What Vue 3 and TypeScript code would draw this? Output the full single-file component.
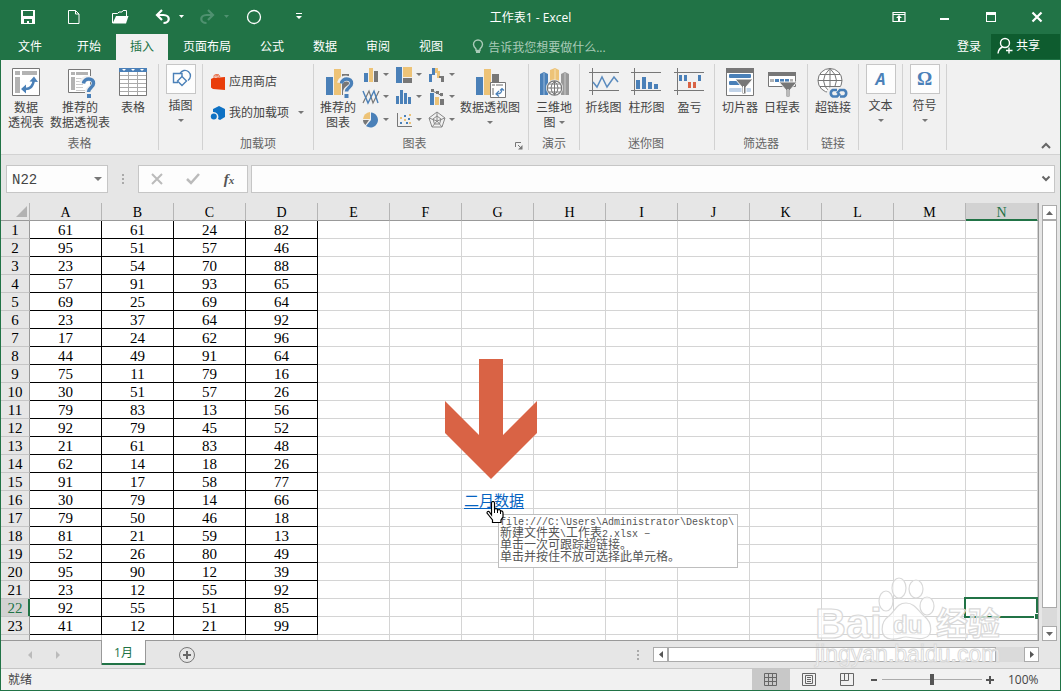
<script setup lang="ts">
import { ref } from 'vue'

const columns: string[] = ['A', 'B', 'C', 'D', 'E', 'F', 'G', 'H', 'I', 'J', 'K', 'L', 'M', 'N']

const values: number[][] = [
  [61, 61, 24, 82],
  [95, 51, 57, 46],
  [23, 54, 70, 88],
  [57, 91, 93, 65],
  [69, 25, 69, 64],
  [23, 37, 64, 92],
  [17, 24, 62, 96],
  [44, 49, 91, 64],
  [75, 11, 79, 16],
  [30, 51, 57, 26],
  [79, 83, 13, 56],
  [92, 79, 45, 52],
  [21, 61, 83, 48],
  [62, 14, 18, 26],
  [91, 17, 58, 77],
  [30, 79, 14, 66],
  [79, 50, 46, 18],
  [81, 21, 59, 13],
  [52, 26, 80, 49],
  [95, 90, 12, 39],
  [23, 12, 55, 92],
  [92, 55, 51, 85],
  [41, 12, 21, 99],
]

const tabs: string[] = ['文件', '开始', '插入', '页面布局', '公式', '数据', '审阅', '视图']
const activeTab = ref('插入')
const cellName = ref('N22')
const formula = ref('')
const zoom = ref(50)
const selected = { column: 'N', row: 22 }
</script>

<template>
  <div class="window">
    <header class="title-bar">
      <div class="quick">
        <button class="q-main" aria-label="保存">
          <svg width="16" height="16" viewBox="0 0 16 16"><path d="M1 1h14v14H1z" fill="#fff" /><path d="M3 2h10v5H3zM4 10h8v4H9v-2H7v2H4z" fill="#217346" /><path d="M7 12h2v2H7z" fill="#fff" /></svg>
        </button>
        <button class="q-main" aria-label="新建">
          <svg width="16" height="16" viewBox="0 0 16 16"><path d="M2.500 1.500h7l3.500 3.500v9.500H2.500zM9.500 1.500V5H13" fill="none" stroke="#fff" /></svg>
        </button>
        <button class="q-main q-open" aria-label="打开">
          <svg width="18" height="16" viewBox="0 0 18 16"><path d="M1.500 14V4.500h5L8 3h3l1-1.500h3.500V7" fill="none" stroke="#fff" /><path d="M5 7h12.500L15 14.500H1.500z" fill="#fff" /></svg>
        </button>
        <button class="q-split" aria-label="撤消">
          <svg width="30" height="16" viewBox="0 0 30 16"><path d="M7 1L2 6l5 5M2.500 6h6c7 0 7 8 0 8" fill="none" stroke="#fff" stroke-width="2.200" /><path d="M24 6h5l-2.500 3z" fill="#fff" /></svg>
        </button>
        <button class="q-split" aria-label="恢复" disabled>
          <svg width="30" height="16" viewBox="0 0 30 16"><path d="M9 1l5 5-5 5M13.500 6h-6c-7 0-7 8 0 8" fill="none" stroke="#4f9170" stroke-width="2.200" /><path d="M25 6h5l-2.500 3z" fill="#4f9170" /></svg>
        </button>
        <button class="q-circle" aria-label="椭圆">
          <svg width="16" height="16" viewBox="0 0 16 16"><circle cx="8" cy="8" r="6.500" fill="none" stroke="#fff" stroke-width="1.300" /></svg>
        </button>
        <button class="q-more" aria-label="自定义快速访问工具栏">
          <svg width="8" height="10" viewBox="0 0 8 10"><path d="M1 1h6v1H1zM1 4h6L4 7z" fill="#fff" /></svg>
        </button>
      </div>
      <div class="title">工作表1 - Excel</div>
      <div class="controls">
        <button aria-label="功能区显示选项">
          <svg width="14" height="12" viewBox="0 0 14 12"><path d="M1 1.500h12v9H1zM1 3.500h12" fill="none" stroke="#fff" stroke-width="1.200" /><path d="M7 4l3 3H8v3H6V7H4z" fill="#fff" /></svg>
        </button>
        <button aria-label="最小化">
          <svg width="12" height="12" viewBox="0 0 12 12"><path d="M1 7h9v2H1z" fill="#fff" /></svg>
        </button>
        <button aria-label="最大化">
          <svg width="12" height="12" viewBox="0 0 12 12"><path d="M1 1h10v10H1zM2 4v6h8V4z" fill="#fff" fill-rule="evenodd" /></svg>
        </button>
        <button aria-label="关闭">
          <svg width="12" height="12" viewBox="0 0 12 12"><path d="M1.500 1.500l9 9M10.500 1.500l-9 9" stroke="#fff" stroke-width="2.200" /></svg>
        </button>
      </div>
    </header>

    <nav class="tabs">
      <button
        v-for="tab in tabs"
        :key="tab"
        class="tab"
        :class="{ active: tab === activeTab, file: tab === '文件' }"
        @click="activeTab = tab"
      >{{ tab }}</button>
      <button class="tell">
        <svg width="12" height="16" viewBox="0 0 12 16"><path d="M4 11.500V10C2.500 8.500 1.500 7.500 1.500 5.500a4.500 4.500 0 0 1 9 0C10.500 7.500 9.500 8.500 8 10v1.500z" fill="none" stroke="#a9cbb8" stroke-width="1.400" /><path d="M4 12h4v2H4z" fill="#a9cbb8" /></svg>
        告诉我您想要做什么...
      </button>
      <div class="account">
        <button class="sign">登录</button>
        <button class="share">
          <svg width="16" height="18" viewBox="0 0 16 18"><circle cx="8" cy="6" r="4.500" fill="none" stroke="#fff" stroke-width="1.400" /><path d="M1 16.500c.5-4 2-5.500 4.500-6.500M12 10.500v6M9 13.500h6.500" fill="none" stroke="#fff" stroke-width="1.400" /></svg>
          共享
        </button>
      </div>
    </nav>

    <section class="ribbon" aria-label="插入">
      <div class="group g-tables">
        <div class="items">
          <button class="big w50">
            <svg width="32" height="32" viewBox="0 0 32 32"><path d="M2.500 2.500h27v27h-27z" fill="#fff" stroke="#777" /><path d="M5 5h5v4H5zM12 5h15v4H12zM5 11h5v16H5z" fill="#b3b3b3" /><path d="M14 23q9 1 10-10" fill="none" stroke="#4a80b8" stroke-width="2.500" /><path d="M16 18.500L11 23l5 4.500zM19.500 15.500l4.500-5 4 5.500z" fill="#4a80b8" /></svg>
            <span>数据<br />透视表</span>
          </button>
          <button class="big w58">
            <svg width="32" height="32" viewBox="0 0 32 32"><path d="M4.500 3.500h22v23h-22z" fill="#fff" stroke="#777" /><path d="M7 6h4v3H7zM12 6h12v3H12zM7 11h4v13H7z" fill="#b3b3b3" /><path d="M12 12.500h9M12 15.500h7M12 18.500h7M12 21.500h7M12 24.500h9" stroke="#ccc" /><path d="M18 17c1-6 13-6 12 1 0 4-6 4-6 8v6" fill="none" stroke="#f0f0f0" stroke-width="6" /><path d="M19.500 17.500c.5-6 10.500-6 10 0 0 4-5 4-5 8.500" fill="none" stroke="#4a80b8" stroke-width="3.500" /><path d="M23 28h4v4h-4z" fill="#4a80b8" /></svg>
            <span>推荐的<br />数据透视表</span>
          </button>
          <button class="big w48">
            <svg width="32" height="32" viewBox="0 0 32 32"><path d="M2.500 2.500h27v27h-27z" fill="#fff" stroke="#777" /><path d="M2 2h28v4H2z" fill="#4a80b8" /><path d="M5 3h4l-2 2zM14 3h4l-2 2zM23 3h4l-2 2z" fill="#fff" /><path d="M3 9.500h26M3 13.500h26M3 17.500h26M3 21.500h26M3 25.500h26M11.500 6v23M20.500 6v23" stroke="#aaa" /></svg>
            <span>表格</span>
          </button>
        </div>
        <div class="caption">表格</div>
      </div>

      <div class="group g-gallery">
        <button class="gallery">
          <i><svg width="24" height="24" viewBox="0 0 24 24"><path d="M11 6.500a5.500 5.500 0 1 1 8 7" fill="none" stroke="#4a80b8" stroke-width="1.400" /><path d="M9 15.500H4.500v-9H13v3" fill="none" stroke="#4a80b8" stroke-width="1.400" /><path d="M13 9.500l4.500 4.500-4.500 4.500L8.500 14z" fill="#fdfdfd" stroke="#4a80b8" stroke-width="1.400" /></svg></i>
          <span>插图</span>
          <b class="caret"></b>
        </button>
      </div>

      <div class="group g-addins">
        <div class="rows">
          <button>
            <svg width="16" height="18" viewBox="0 0 16 18"><path d="M1 6l2-1v11l-2-1.500zM3 5l12-1v13L3 16z" fill="#e93d0a" /><path d="M4 5V2.500q2-2 4 0V5M6 4V2q3-2 4 2" fill="none" stroke="#e96a42" /></svg>
            应用商店
          </button>
          <button>
            <svg width="16" height="16" viewBox="0 0 16 16"><path d="M9 1l6 3v8l-5 3-2-1a5 5 0 0 0-5-7V4z" fill="#0f72c4" /><circle cx="3.800" cy="11.500" r="3" fill="#0f72c4" /></svg>
            我的加载项
            <b class="caret"></b>
          </button>
        </div>
        <div class="caption">加载项</div>
      </div>

      <div class="group g-charts">
        <div class="items">
          <button class="big w48">
            <svg width="32" height="32" viewBox="0 0 32 32"><path d="M4 11h7v18H4z" fill="#4a80b8" /><path d="M12 3h7v26h-7z" fill="#edc377" /><path d="M20 8h7v21h-7z" fill="#777" /><path d="M18 17c1-6 13-6 12 1 0 4-6 4-6 8v6" fill="none" stroke="#f0f0f0" stroke-width="6" /><path d="M19.500 17.500c.5-6 10.500-6 10 0 0 4-5 4-5 8" fill="none" stroke="#4a80b8" stroke-width="3.500" /><path d="M22.500 28h4v4h-4z" fill="#4a80b8" /></svg>
            <span>推荐的<br />图表</span>
          </button>
          <div class="minis">
            <button aria-label="柱形图">
              <svg width="18" height="18" viewBox="0 0 18 18"><path d="M2 7h4v9H2z" fill="#4a80b8" /><path d="M7 2h4v14H7z" fill="#edc377" /><path d="M12 5h4v11h-4z" fill="#777" /></svg><b class="caret"></b>
            </button>
            <button aria-label="层次结构图">
              <svg width="18" height="18" viewBox="0 0 18 18"><path d="M1 1h6v16H1z" fill="#4a80b8" /><path d="M8 1h9v10H8z" fill="#edc377" /><path d="M8 12h9v5H8z" fill="#777" /></svg><b class="caret"></b>
            </button>
            <button aria-label="瀑布图">
              <svg width="18" height="18" viewBox="0 0 18 18"><path d="M1 8h3v8H1zM4 2h3v7H4z" fill="#4a80b8" /><path d="M7 2h3v5H7zM9 5h3v7H9z" fill="#edc377" /><path d="M11 10h4v2h-4zM13 10h3v6h-3z" fill="#777" /></svg><b class="caret"></b>
            </button>
            <button aria-label="折线图">
              <svg width="18" height="18" viewBox="0 0 18 18"><path d="M1 15L7 3l4 12 6-12" fill="none" stroke="#777" stroke-width="1.200" /><path d="M1 3l5 12 6-12 4 12" fill="none" stroke="#4a80b8" stroke-width="1.400" /></svg><b class="caret"></b>
            </button>
            <button aria-label="统计图表">
              <svg width="18" height="18" viewBox="0 0 18 18"><path d="M1 8h3v8H1zM5 2h3v14H5zM9 5h3v11H9zM13 9h3v7h-3z" fill="#4a80b8" /></svg><b class="caret"></b>
            </button>
            <button aria-label="组合图">
              <svg width="18" height="18" viewBox="0 0 18 18"><path d="M2 5h4v12H2z" fill="#4a80b8" /><path d="M7 9h4v8H7z" fill="#edc377" /><path d="M12 11h4v6h-4z" fill="#777" /><path d="M4 3l5 2 5 3" stroke="#777" fill="none" /><path d="M3 1h3v3H3zM8 3h3v3H8zM12 5h3v3h-3z" fill="#777" /></svg><b class="caret"></b>
            </button>
            <button aria-label="饼图">
              <svg width="18" height="18" viewBox="0 0 18 18"><path d="M9 9V1.500A7.500 7.500 0 1 1 4 15z" fill="#4a80b8" /><path d="M8 8V1A7.500 7.500 0 0 0 1 8z" fill="#edc377" /><path d="M7 9H1c0 2 1 4 2.500 5z" fill="#777" /></svg><b class="caret"></b>
            </button>
            <button aria-label="散点图">
              <svg width="18" height="18" viewBox="0 0 18 18"><path d="M2.500 2v13.500H17" fill="none" stroke="#777" /><path d="M5 11h2v2H5zM9 4h2v2H9zM13 7h2v2h-2zM11 11h2v2h-2z" fill="#4a80b8" /><path d="M5 6h2v2H5zM9 8h2v2H9zM14 3h2v2h-2zM14 11h2v2h-2z" fill="#edc377" /></svg><b class="caret"></b>
            </button>
            <button aria-label="雷达图">
              <svg width="18" height="18" viewBox="0 0 18 18"><path d="M9 1l8 6-3 9H4L1 7zM9 5l4 3-1.500 5h-5L5 8zM9 1v9M17 7l-8 3M1 7l8 3M4 16l5-6 5 6" fill="none" stroke="#888" /></svg><b class="caret"></b>
            </button>
          </div>
          <button class="big w58">
            <svg width="32" height="32" viewBox="0 0 32 32"><path d="M2 11h7v18H2z" fill="#4a80b8" /><path d="M10 3h7v26h-7z" fill="#edc377" /><path d="M18 8h7v8h-7z" fill="#777" /><path d="M16.500 16.500h15v15h-15z" fill="#fff" stroke="#777" /><path d="M18 18h3v2h-3zM22 18h7v2h-7zM18 22h2v7h-2z" fill="#b3b3b3" /><path d="M23 28q5 0 5-5M25 25l-3 3 3 2.500M26 24.500l2-2 2 2" fill="none" stroke="#4a80b8" stroke-width="1.200" /></svg>
            <span>数据透视图</span>
            <b class="caret low"></b>
          </button>
        </div>
        <div class="caption with-launcher">
          <span>图表</span>
          <button aria-label="查看所有图表">
            <svg width="8" height="8" viewBox="0 0 8 8"><path d="M.5 5V.5H6M3 3l3 3" fill="none" stroke="#777" /><path d="M7.500 3v4.500H3z" fill="#777" /></svg>
          </button>
        </div>
      </div>

      <div class="group g-map">
        <div class="items">
          <button class="big w50">
            <svg width="32" height="32" viewBox="0 0 32 32"><path d="M2 8l4-2 4 2v21H2z" fill="#4a80b8" /><path d="M6 7v22" stroke="#9cbbdc" /><path d="M12 4l5-2 4 2v14h-9z" fill="#edc377" /><path d="M17 3v12" stroke="#f7e2b7" /><path d="M23 8l4-2 4 2v21h-8z" fill="#999" /><path d="M27 7v22" stroke="#ccc" /><circle cx="16.500" cy="22" r="8.500" fill="#f0f0f0" /><circle cx="16.500" cy="22" r="7.200" fill="#fff" stroke="#777" stroke-width="1.200" /><path d="M9.500 22h14M11 18h11M11 26h11M16.500 15v14M16.500 15q-7 7 0 14M16.500 15q7 7 0 14" fill="none" stroke="#777" /></svg>
            <span>三维地<br />图 <b class="caret inline"></b></span>
          </button>
        </div>
        <div class="caption">演示</div>
      </div>

      <div class="group g-spark">
        <div class="items">
          <button class="big w43">
            <svg width="32" height="32" viewBox="0 0 32 32"><path d="M4.500 2v27M1 6.500h30M1 24.500h30" stroke="#777" /><path d="M5 16l4 5 5-10 5 10 7-10 4 5" fill="none" stroke="#5a8bbe" stroke-width="1.500" /></svg>
            <span>折线图</span>
          </button>
          <button class="big w43">
            <svg width="32" height="32" viewBox="0 0 32 32"><path d="M3.500 2v27M0 6.500h30M0 24.500h30" stroke="#777" /><path d="M5 14h4v9H5zM11 11h4v12h-4zM17 16h4v7h-4zM23 18h4v5h-4z" fill="#4a80b8" /></svg>
            <span>柱形图</span>
          </button>
          <button class="big w43">
            <svg width="32" height="32" viewBox="0 0 32 32"><path d="M3.500 2v27M0 6.500h30M0 24.500h30" stroke="#777" /><path d="M5 9h3v6H5zM10 9h3v6h-3zM24 9h3v6h-3z" fill="#4a80b8" /><path d="M14 16h3v6h-3zM19 16h3v6h-3z" fill="#d96345" /></svg>
            <span>盈亏</span>
          </button>
        </div>
        <div class="caption">迷你图</div>
      </div>

      <div class="group g-filter">
        <div class="items">
          <button class="big w42">
            <svg width="32" height="32" viewBox="0 0 32 32"><path d="M2.500 2.500h27v27h-27z" fill="#fff" stroke="#777" /><path d="M2 2h28v5H2z" fill="#777" /><rect x="5" y="8" width="22" height="4" rx="1" fill="#4a80b8" /><rect x="5" y="15" width="12" height="4" rx="1" fill="#4a80b8" /><rect x="5" y="22" width="22" height="4" rx="1" fill="#c1d3e8" /><path d="M11 13h18l-7 8v7h-4v-7z" fill="#777" stroke="#fff" /><path d="M19.500 20v7" stroke="#fff" /></svg>
            <span>切片器</span>
          </button>
          <button class="big w42">
            <svg width="32" height="32" viewBox="0 0 32 32"><path d="M2.500 6.500h27v14h-27z" fill="#fff" stroke="#777" /><path d="M2 6h28v4H2z" fill="#777" /><path d="M4 13h4v3H4zM24 13h3v3h-3z" fill="#b3b3b3" /><path d="M9 13h4v3H9zM14 13h4v3h-4zM19 13h4v3h-4z" fill="#4a80b8" /><path d="M13 16h18l-7 8v7h-4v-7z" fill="#777" stroke="#f0f0f0" /><path d="M22 23v7" stroke="#fff" /></svg>
            <span>日程表</span>
          </button>
        </div>
        <div class="caption">筛选器</div>
      </div>

      <div class="group g-link">
        <div class="items">
          <button class="big w50">
            <svg width="32" height="32" viewBox="0 0 32 32"><circle cx="13" cy="14.500" r="12" fill="#fff" stroke="#777" /><path d="M1 14.500h24M3 8.500h20M3 20.500h20M13 2.500v24M13 2.500q-13 12 0 24M13 2.500q13 12 0 24" fill="none" stroke="#777" /><rect x="10" y="21" width="22" height="11" rx="5" fill="#f0f0f0" /><path d="M20 24h-4a3.500 3.500 0 0 0 0 6.500h4l3-3M20 27.500l3-3.500h4a3.500 3.500 0 0 1 0 6.500h-4" fill="none" stroke="#4a80b8" stroke-width="2.600" /></svg>
            <span>超链接</span>
          </button>
        </div>
        <div class="caption">链接</div>
      </div>

      <div class="group g-gallery">
        <button class="gallery">
          <i class="glyph-a">A</i>
          <span>文本</span>
          <b class="caret"></b>
        </button>
      </div>
      <div class="group g-gallery">
        <button class="gallery">
          <i class="glyph-o">Ω</i>
          <span>符号</span>
          <b class="caret"></b>
        </button>
      </div>
      <button class="collapse" aria-label="折叠功能区">
        <svg width="10" height="8" viewBox="0 0 10 8"><path d="M1 6l4-4 4 4" fill="none" stroke="#666" stroke-width="2" /></svg>
      </button>
    </section>

    <section class="formula-bar">
      <div class="name-box">
        <input v-model="cellName" aria-label="名称框" />
        <button aria-label="名称列表"><svg width="10" height="6" viewBox="0 0 10 6"><path d="M1 1h8L5 5z" fill="#777" /></svg></button>
      </div>
      <div class="dots"><i></i><i></i><i></i></div>
      <div class="edit-buttons">
        <button aria-label="取消" disabled><svg width="16" height="14" viewBox="0 0 16 14"><path d="M3 2l10 10M13 2L3 12" stroke="#bbb" stroke-width="2" /></svg></button>
        <button aria-label="输入" disabled><svg width="16" height="14" viewBox="0 0 16 14"><path d="M2 7l4 4 8-9" fill="none" stroke="#bbb" stroke-width="2.500" /></svg></button>
        <button class="fx" aria-label="插入函数">f<small>x</small></button>
      </div>
      <div class="formula">
        <input v-model="formula" aria-label="编辑栏" />
        <button aria-label="展开编辑栏"><svg width="10" height="8" viewBox="0 0 10 8"><path d="M1.500 1.500L5 5l3.500-3.500" fill="none" stroke="#666" stroke-width="2" /></svg></button>
      </div>
    </section>

    <main class="sheet">
      <div class="viewport">
        <table class="grid">
          <thead>
            <tr>
              <th class="corner"><svg width="11" height="11" viewBox="0 0 11 11"><path d="M11 0v11H0z" fill="#b2b2b2" /></svg></th>
              <th v-for="c in columns" :key="c" scope="col" :class="{ picked: c === selected.column }">{{ c }}</th>
            </tr>
          </thead>
          <tbody>
            <tr v-for="(row, r) in values" :key="r">
              <th scope="row" :class="{ picked: r + 1 === selected.row }">{{ r + 1 }}</th>
              <td
                v-for="(c, i) in columns"
                :key="c"
                :class="{ filled: i < 4, current: c === selected.column && r + 1 === selected.row, linked: c === 'G' && r === 15 }"
              >
                <a v-if="c === 'G' && r === 15" href="#">二月数据</a>
                <template v-else>{{ row[i] }}</template>
              </td>
            </tr>
            <tr>
              <th></th>
              <td v-for="c in columns" :key="c"></td>
            </tr>
          </tbody>
        </table>

        <svg class="big-arrow" width="92" height="120" viewBox="0 0 92 120"><path d="M34 0h24v76l34-34v32l-46 46L0 74V42l34 34z" fill="#d96345" /></svg>
        <div class="tooltip" role="tooltip">
          <div><code>file:///C:\Users\Administrator\Desktop\</code></div>
          <div>新建文件夹<code>\</code>工作表<code>2.xlsx −</code></div>
          <div>单击一次可跟踪超链接。</div>
          <div>单击并按住不放可选择此单元格。</div>
        </div>
        <svg class="pointer" width="18" height="22" viewBox="0 0 18 22"><path d="M5.500 14V2q0-1.500 1.500-1.500T8.500 2v6q3-1 3 1 3-1 3 1 2.500-.5 2.500 2v4l-2 3v2.500H6.500V19L3 14.500 1 12q0-2 2-1.500z" fill="#fff" stroke="#000" stroke-width="1.200" /><path d="M8.500 8v4M11.500 9v3M14.500 10v3" stroke="#000" /></svg>
      </div>
      <div class="v-side">
        <div class="v-scroll">
          <button aria-label="向上滚动"><svg width="9" height="6" viewBox="0 0 9 6"><path d="M1 5h7L4.500 1z" fill="#666" /></svg></button>
          <div class="thumb"></div>
          <div class="rest"></div>
          <button aria-label="向下滚动"><svg width="9" height="6" viewBox="0 0 9 6"><path d="M1 1h7L4.500 5z" fill="#666" /></svg></button>
        </div>
      </div>
    </main>

    <section class="sheet-bar">
      <div class="sheet-nav">
        <button aria-label="上一张工作表" disabled><svg width="6" height="8" viewBox="0 0 6 8"><path d="M5 0v8L1 4z" fill="#bbb" /></svg></button>
        <button aria-label="下一张工作表" disabled><svg width="6" height="8" viewBox="0 0 6 8"><path d="M1 0v8l4-4z" fill="#bbb" /></svg></button>
      </div>
      <button class="sheet-tab">1月</button>
      <button class="add" aria-label="新工作表">
        <svg width="18" height="18" viewBox="0 0 18 18"><circle cx="9" cy="9" r="7.500" fill="none" stroke="#777" /><path d="M9 5v8M5 9h8" stroke="#666" stroke-width="2" /></svg>
      </button>
      <div class="dots tab-dots"><i></i><i></i><i></i></div>
      <div class="h-scroll">
        <button aria-label="向左滚动"><svg width="6" height="9" viewBox="0 0 6 9"><path d="M5 1v7L1 4.500z" fill="#555" /></svg></button>
        <div class="thumb"></div>
        <div class="rest"></div>
        <button aria-label="向右滚动"><svg width="6" height="9" viewBox="0 0 6 9"><path d="M1 1v7l4-3.500z" fill="#555" /></svg></button>
      </div>
    </section>

    <footer class="status">
      <span class="ready">就绪</span>
      <button class="view on" aria-label="普通"><svg width="14" height="14" viewBox="0 0 14 14"><path d="M.5.500h12v12H.5zM.5 4.500h12M.5 8.500h12M4.500.5v12M8.500.5v12" fill="none" stroke="#666" /></svg></button>
      <button class="view" aria-label="页面布局"><svg width="14" height="14" viewBox="0 0 14 14"><path d="M.5.500h13v12H.5zM3.500 2.500h7v8h-7zM5 4.500h4M5 6.500h4M5 8.500h4" fill="none" stroke="#666" /></svg></button>
      <button class="view" aria-label="分页预览"><svg width="14" height="14" viewBox="0 0 14 14"><path d="M.5.500h13v12H.5zM4.500.5v7M8.500.5v7M.5 7.500h8" fill="none" stroke="#666" /></svg></button>
      <button class="step" aria-label="缩小"><svg width="8" height="8" viewBox="0 0 8 8"><path d="M1 3h6v2H1z" fill="#555" /></svg></button>
      <input v-model="zoom" class="zoom" type="range" min="0" max="100" aria-label="显示比例" />
      <button class="step" aria-label="放大"><svg width="8" height="8" viewBox="0 0 8 8"><path d="M0 3h8v2H0zM3 0h2v8H3z" fill="#555" /></svg></button>
      <span class="percent">100%</span>
    </footer>

    <svg class="watermark" width="196" height="94" viewBox="0 0 196 94" aria-hidden="true">
      <g fill="#fff" fill-opacity="0.700" stroke="#d9d9d9" stroke-width="1.200">
        <ellipse cx="73" cy="26" rx="7" ry="10" />
        <ellipse cx="86" cy="13" rx="7" ry="10" />
        <ellipse cx="103" cy="14" rx="7" ry="9" />
        <ellipse cx="114" cy="31" rx="7" ry="9" />
        <path d="M93 28c-9 0-11 8-17 13-9 6-10 22 2 23 6 1 10-2 15-2s12 3 18 1c9-2 9-15 0-22-6-5-9-13-18-13z" />
        <text x="2" y="63" class="wm-latin">Bai</text>
        <text x="80" y="58" class="wm-du">du</text>
        <text x="123" y="60" class="wm-cjk">经验</text>
        <text x="2" y="87" class="wm-url">jingyan.baidu.com</text>
      </g>
    </svg>
  </div>
</template>

<style>
html,
body {
  margin: 0;
}
</style>

<style scoped>
.window,
.window * {
  box-sizing: border-box;
}
.window {
  position: relative;
  display: flex;
  flex-direction: column;
  height: 100vh;
  overflow: hidden;
  border: solid #217346;
  border-width: 0 1px 1px;
  background: #e6e6e6;
  color: #444;
  font: 12px/15px "Open Sans", "Noto Sans CJK SC", sans-serif;
}
button,
input {
  margin: 0;
  padding: 0;
  border: 0;
  background: none;
  color: inherit;
  font: inherit;
}
svg {
  display: block;
  flex: none;
}
.caret {
  display: block;
  flex: none;
  border: solid transparent;
  border-width: 3px 3px 0;
  border-top-color: #777;
}

/* title bar */
.title-bar {
  display: grid;
  grid-template-columns: 1fr auto 1fr;
  align-items: center;
  height: 34px;
  background: #217346;
  color: #fff;
}
.quick {
  display: flex;
  padding-left: 4px;
}
.quick button,
.controls button {
  display: flex;
  align-items: center;
  justify-content: center;
  height: 32px;
}
.q-main {
  width: 46px;
}
.q-open {
  margin-right: 5px;
}
.q-split {
  width: 44px;
}
.q-circle {
  width: 36px;
}
.q-more {
  width: 54px;
}
.controls {
  display: flex;
  justify-content: flex-end;
}
.controls button {
  width: 46px;
}

/* tab strip */
.tabs {
  display: flex;
  gap: 1px;
  height: 26px;
  background: #217346;
  color: #fff;
}
.tab {
  padding: 0 14px 2px;
}
.tab.file {
  padding: 0 20px 2px 17px;
}
.tab.active {
  background: #f1f1f1;
  color: #217346;
}
.tell {
  display: flex;
  align-items: center;
  gap: 4px;
  padding-left: 14px;
  color: #a9cbb8;
}
.account {
  display: flex;
  align-items: flex-start;
  margin-left: auto;
}
.sign {
  height: 24px;
  margin-right: 10px;
}
.share {
  display: flex;
  align-items: center;
  gap: 3px;
  width: 69px;
  height: 25px;
  padding: 0 0 2px 6px;
  background: #0e5c2f;
}

/* ribbon */
.ribbon {
  display: flex;
  padding: 4px 0;
  border-bottom: 1px solid #d2d2d2;
  background: #f1f1f1;
}
.group {
  display: flex;
  flex-direction: column;
  flex: none;
  height: 86px;
  border-right: 1px solid #d2d2d2;
}
.g-tables { width: 158px; }
.g-gallery { width: 44px; }
.g-addins { width: 111px; }
.g-charts { width: 215px; }
.g-map,
.g-link { width: 51px; }
.g-spark { width: 135px; padding-left: 2px; }
.g-filter { width: 93px; padding-left: 4px; }
.items {
  display: flex;
}
.big {
  display: flex;
  flex-direction: column;
  align-items: center;
  flex: none;
  padding-top: 2px;
  white-space: nowrap;
}
.big svg {
  margin-bottom: 2px;
}
.w42 { width: 42px; }
.w43 { width: 43px; }
.w48 { width: 48px; }
.w50 { width: 50px; }
.w58 { width: 58px; }
.caret.low {
  margin-top: 6px;
}
.caret.inline {
  display: inline-block;
  margin-bottom: 3px;
}
.caption {
  height: 14px;
  margin-top: auto;
  color: #666;
  text-align: center;
}
.g-spark .caption,
.g-filter .caption {
  padding-right: 4px;
}
.with-launcher {
  display: flex;
}
.with-launcher span {
  flex: 1;
}
.with-launcher button {
  width: 13px;
  padding-top: 5px;
}
.gallery {
  display: flex;
  flex-direction: column;
  align-items: center;
}
.gallery i {
  display: flex;
  align-items: center;
  justify-content: center;
  width: 30px;
  height: 30px;
  margin-bottom: 4px;
  border: 1px solid #c6c6c6;
  background: #fdfdfd;
  color: #4a80b8;
}
.gallery .caret {
  margin-top: 6px;
}
.gallery .glyph-a {
  font: italic bold 16px "Open Sans", sans-serif;
}
.gallery .glyph-o {
  font: bold 19px "Liberation Serif", serif;
}
.rows {
  padding-top: 2px;
}
.rows button {
  display: flex;
  align-items: center;
  gap: 3px;
  height: 31px;
  padding-left: 7px;
}
.rows .caret {
  margin-left: 6px;
}
.minis {
  display: grid;
  grid-template-columns: repeat(3, 33px);
  grid-template-rows: 21px 23px 23px;
}
.minis button {
  display: flex;
  align-items: center;
  gap: 3px;
}
.collapse {
  align-self: flex-end;
  margin-left: auto;
  padding: 0 9px 0 0;
}

/* formula bar */
.formula-bar {
  display: flex;
  padding: 10px 5px;
}
.name-box,
.edit-buttons,
.formula {
  display: flex;
  align-items: center;
  height: 28px;
  border: 1px solid #c6c6c6;
  background: #fdfdfd;
}
.name-box {
  width: 102px;
}
.name-box input {
  flex: 1;
  min-width: 0;
  padding: 2px 0 0 5px;
  font: 14px "Liberation Mono", monospace;
}
.name-box button {
  padding-right: 4px;
}
.dots {
  display: flex;
  flex-direction: column;
  align-items: center;
  justify-content: center;
  gap: 2px;
  width: 30px;
}
.dots i {
  width: 2px;
  height: 2px;
  background: #aaa;
}
.edit-buttons {
  width: 110px;
  margin-right: 3px;
}
.edit-buttons button {
  display: flex;
  align-items: center;
  justify-content: center;
  width: 36px;
}
.edit-buttons .fx {
  align-items: baseline;
  color: #555;
  font: italic bold 15px "Liberation Serif", serif;
}
.fx small {
  font-size: 11px;
}
.formula {
  flex: 1;
}
.formula input {
  flex: 1;
  min-width: 0;
  height: 24px;
  padding-left: 5px;
}
.formula button {
  padding-right: 3px;
}

/* worksheet */
.sheet {
  display: flex;
  flex: 1;
  min-height: 0;
}
.viewport {
  position: relative;
  flex: 1;
  min-width: 0;
  overflow: hidden;
  border-bottom: 1px solid #999;
  background: #fff;
}
.grid {
  width: 100%;
  border-spacing: 0;
  table-layout: fixed;
  color: #000;
  font: 15px/15px "Liberation Serif", serif;
}
.grid th,
.grid td {
  height: 18px;
  padding: 2px 0 0;
  border: solid #d4d4d4;
  border-width: 0 1px 1px 0;
  text-align: center;
  white-space: nowrap;
}
.grid th {
  border-right-color: #999;
  background: #e6e6e6;
  font-weight: normal;
}
.grid thead th {
  padding-top: 3px;
  border-right-color: #b5b5b5;
  border-bottom-color: #999;
  font-size: 14px;
  line-height: 14px;
}
.grid .corner {
  width: 29px;
  padding: 0 0 0 15px;
}
.grid tbody th {
  border-bottom-color: #c6c6c6;
}
.grid th.picked {
  background: #d2d2d2;
  color: #217346;
}
.grid thead th.picked {
  box-shadow: inset 0 -1px #217346;
  border-bottom-color: #217346;
}
.grid tbody th.picked {
  box-shadow: inset -1px 0 #217346;
  border-right-color: #217346;
}
.grid td.filled {
  border-color: #000;
}
.grid td.linked {
  padding: 0 0 0 2px;
  text-align: left;
}
.linked a {
  display: block;
  color: #0563c1;
  font: 15px/15px "Noto Sans CJK SC", sans-serif;
  text-underline-offset: 2px;
}
.current {
  position: relative;
}
.current::before {
  content: "";
  position: absolute;
  inset: -2px -1px -2px -2px;
  border: 2px solid #217346;
}
.current::after {
  content: "";
  position: absolute;
  right: -1px;
  bottom: -3px;
  width: 3px;
  height: 5px;
  border: solid #fff;
  border-width: 1px 0 0 1px;
  background: #217346;
}
.big-arrow {
  position: absolute;
  left: 444px;
  top: 156px;
}
.tooltip {
  position: absolute;
  left: 497px;
  top: 311px;
  padding: 1px 3px 3px 1px;
  border: 1px solid #bebebe;
  background: #fff;
  color: #555;
  font: 12px/12px "Liberation Mono", "Noto Sans CJK SC", monospace;
  white-space: pre;
}
.tooltip div {
  height: 12px;
}
.tooltip code {
  font: 10px/12px "Liberation Mono", monospace;
}
.pointer {
  position: absolute;
  left: 485px;
  top: 298px;
}
.v-side {
  width: 22px;
  padding: 2px 3px 0;
  border-left: 1px solid #999;
}
.v-scroll {
  display: flex;
  flex-direction: column;
  width: 15px;
  height: 100%;
}
.v-scroll button,
.h-scroll button {
  display: flex;
  align-items: center;
  justify-content: center;
  flex: none;
  width: 15px;
  height: 15px;
  border: 1px solid #ababab;
  background: #fff;
}
.thumb {
  border: 1px solid #ababab;
  background: #fff;
}
.rest {
  background: #dadada;
}
.v-scroll .thumb { flex: 388 0 0; }
.v-scroll .rest { flex: 18 0 0; }
.h-scroll .thumb { flex: 328 0 0; }
.h-scroll .rest { flex: 28 0 0; }

/* sheet tabs */
.sheet-bar {
  display: flex;
  align-items: center;
  height: 27px;
}
.sheet-nav {
  display: flex;
  gap: 22px;
  width: 100px;
  padding-left: 26px;
}
.sheet-tab {
  position: relative;
  align-self: flex-start;
  width: 45px;
  height: 25px;
  margin: -1px 32px 0 0;
  border: solid #999;
  border-width: 0 1px;
  background: #fff;
  box-shadow: inset 0 -2px #217346;
  color: #217346;
}
.tab-dots {
  margin-left: auto;
}
.h-scroll {
  display: flex;
  width: 386px;
  height: 15px;
  margin-right: 21px;
}

/* status bar */
.status {
  display: flex;
  align-items: center;
  height: 22px;
  border-top: 1px solid #c6c6c6;
  background: #f1f1f1;
}
.ready {
  margin: 0 auto 0 7px;
}
.view {
  display: flex;
  align-items: center;
  justify-content: center;
  width: 38px;
  height: 21px;
}
.view.on {
  background: #c8c8c8;
}
.step {
  display: flex;
  align-items: center;
  justify-content: center;
  width: 16px;
}
.zoom {
  width: 100px;
  height: 14px;
  appearance: none;
}
.zoom::-webkit-slider-runnable-track {
  height: 11px;
  background: linear-gradient(#ababab, #ababab) center / 100% 1px no-repeat;
}
.zoom::-webkit-slider-thumb {
  appearance: none;
  width: 4px;
  height: 11px;
  background: #555;
}
.percent {
  width: 52px;
  margin-left: 10px;
}

/* watermark */
.watermark {
  position: absolute;
  right: 51px;
  bottom: 21px;
  pointer-events: none;
}
.wm-latin {
  font: bold 43px "Liberation Sans", sans-serif;
}
.wm-du {
  font: bold 24px "Liberation Sans", sans-serif;
}
.wm-cjk {
  font: bold 32px "Noto Sans CJK SC", sans-serif;
}
.wm-url {
  font: 23px "Liberation Sans", sans-serif;
  stroke-width: 1px;
}
</style>
